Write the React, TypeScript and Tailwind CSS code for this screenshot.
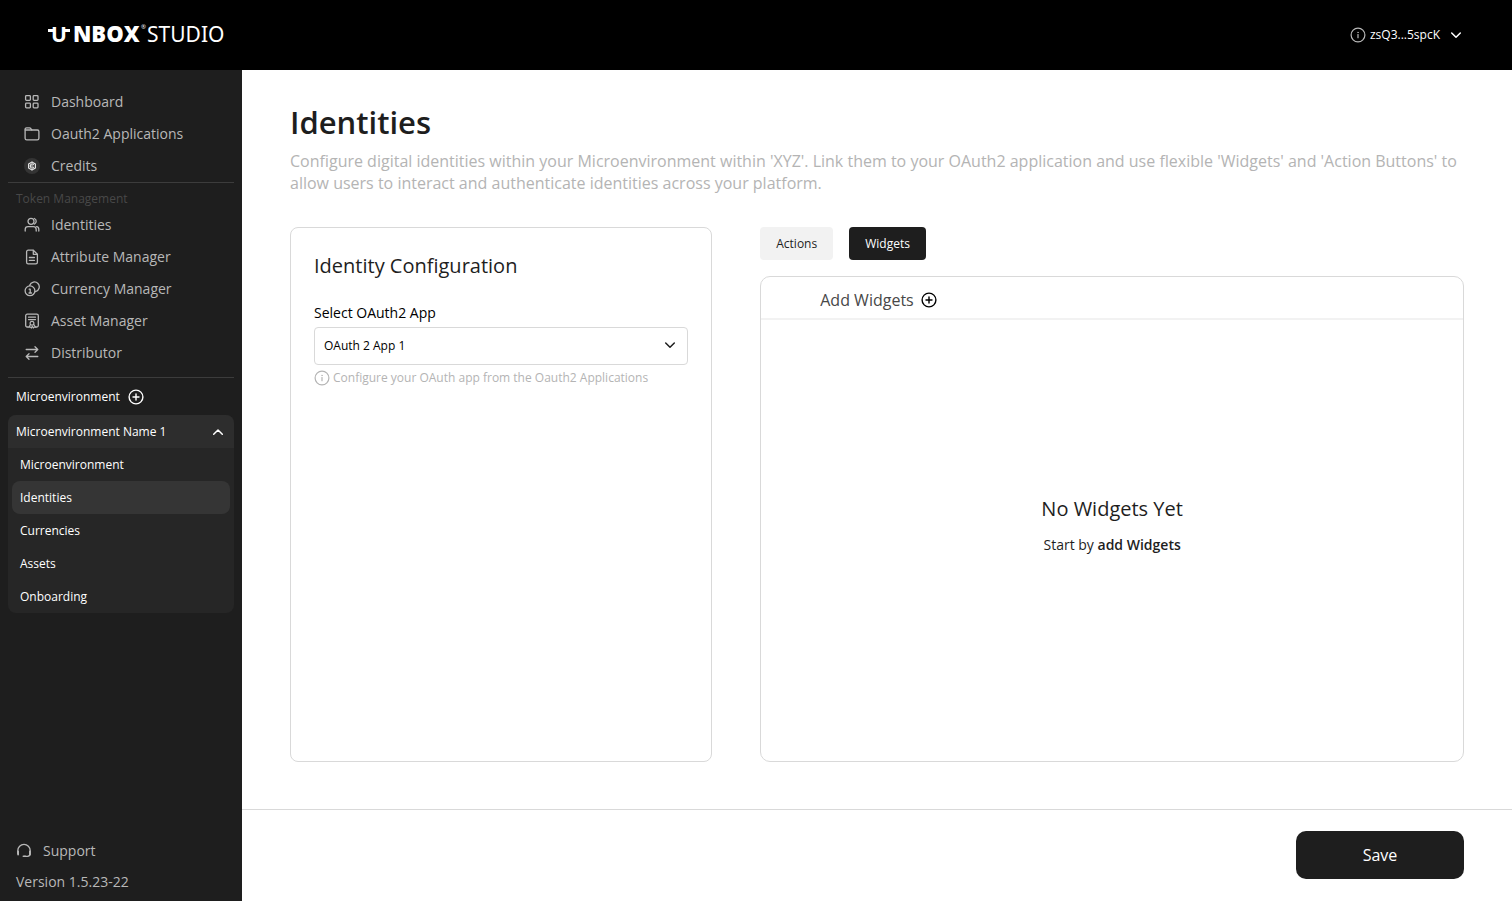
import { useState } from 'react'
import type { ReactNode } from 'react'

interface NavItem {
  label: string
  icon: ReactNode
}

function Icon({ children, className = '' }: { children: ReactNode; className?: string }) {
  return (
    <svg viewBox="0 0 16 16" fill="none" stroke="currentColor" strokeLinecap="round" strokeLinejoin="round"
      className={`w-4 h-4 shrink-0 ${className}`} aria-hidden="true">
      {children}
    </svg>
  )
}

function InfoIcon({ className }: { className?: string }) {
  return (
    <Icon className={className}>
      <circle cx="8" cy="8" r="6.9" strokeWidth="1.2" />
      <path d="M8 7.5v3.2" strokeWidth="1.2" />
      <circle cx="8" cy="5.4" r="0.5" fill="currentColor" strokeWidth="0.4" />
    </Icon>
  )
}

function PlusCircleIcon() {
  return (
    <Icon>
      <circle cx="8" cy="8" r="6.9" strokeWidth="1.4" />
      <path d="M8 5v6M5 8h6" strokeWidth="1.4" />
    </Icon>
  )
}

function Chevron({ up = false, className }: { up?: boolean; className?: string }) {
  return (
    <Icon className={className}>
      <path d={up ? 'M3.7 10.2 8 6l4.3 4.2' : 'M3.7 6 8 10.2 12.3 6'} strokeWidth="1.5" />
    </Icon>
  )
}

const topNav: NavItem[] = [
  {
    label: 'Dashboard',
    icon: (
      <Icon>
        <rect x="1.6" y="1.6" width="4.8" height="4.8" rx="0.8" strokeWidth="1.3" />
        <rect x="9.2" y="1.6" width="4.8" height="4.8" rx="0.8" strokeWidth="1.3" />
        <rect x="1.6" y="9.1" width="4.8" height="4.8" rx="0.8" strokeWidth="1.3" />
        <rect x="9.2" y="9.1" width="4.8" height="4.8" rx="0.8" strokeWidth="1.3" />
      </Icon>
    ),
  },
  {
    label: 'Oauth2 Applications',
    icon: (
      <Icon>
        <path d="M1.1 12.2V3.4c0-.9.6-1.5 1.5-1.5h3c.5 0 .9.2 1.2.6l1 1.5h5.6c.9 0 1.5.6 1.5 1.5v6.7c0 .9-.7 1.6-1.6 1.6H2.7c-.9 0-1.6-.7-1.6-1.6Z" strokeWidth="1.3" />
        <path d="M1.3 4h6.5" strokeWidth="1.3" />
      </Icon>
    ),
  },
  {
    label: 'Credits',
    icon: (
      <Icon>
        <circle cx="8" cy="8" r="8" fill="#343434" stroke="none" />
        <path d="m8 3.9 3.4 2v4.2L8 12.1l-3.4-2V5.9Z" stroke="#e4e4e4" strokeWidth="1.2" />
        <path d="M9.5 6.5A2 2 0 1 0 9.5 9.5M6.6 8h2.5" stroke="#e4e4e4" strokeWidth="1.1" />
      </Icon>
    ),
  },
]

const tokenNav: NavItem[] = [
  {
    label: 'Identities',
    icon: (
      <Icon>
        <circle cx="7" cy="4.3" r="3" strokeWidth="1.3" />
        <path d="M1.2 14v-1.6A2.8 2.8 0 0 1 4 9.6h5.4a2.8 2.8 0 0 1 2.8 2.8V14" strokeWidth="1.3" />
        <path d="M10.3 1.5a3 3 0 0 1 0 5.6M12.6 9.7a2.6 2.6 0 0 1 2.2 2.6V14" strokeWidth="1.3" />
      </Icon>
    ),
  },
  {
    label: 'Attribute Manager',
    icon: (
      <Icon>
        <path d="M9.3 1.2H4.2c-.9 0-1.6.7-1.6 1.6v10.4c0 .9.7 1.6 1.6 1.6h7.6c.9 0 1.6-.7 1.6-1.6V5.3Z" strokeWidth="1.3" />
        <path d="M9.3 1.4v3.9h3.9M5.4 8.5h5M5.4 11.4h5" strokeWidth="1.3" />
      </Icon>
    ),
  },
  {
    label: 'Currency Manager',
    icon: (
      <Icon>
        <circle cx="6" cy="9.8" r="4.9" strokeWidth="1.3" />
        <path d="M5.7 4.3a4.9 4.9 0 1 1 5.8 6.3" strokeWidth="1.3" />
        <path d="M5.2 8.2h1v3.6M5 12h2.5" strokeWidth="1.3" />
      </Icon>
    ),
  },
  {
    label: 'Asset Manager',
    icon: (
      <Icon>
        <path d="M4.3 14H3.2c-.9 0-1.5-.6-1.5-1.5V2.7c0-.9.6-1.5 1.5-1.5h9.6c.9 0 1.5.6 1.5 1.5v9.8c0 .9-.6 1.5-1.5 1.5h-1.1" strokeWidth="1.3" />
        <path d="M4.5 4.2h7M4.5 6.6h7" strokeWidth="1.2" />
        <circle cx="8" cy="10.3" r="1.9" strokeWidth="1.2" />
        <path d="m6.3 11.7-1.5 2.6 1.9-.2.7 1 .9-1.9 1 1.9.7-1 1.7.2-2.1-3" strokeWidth="1.1" />
      </Icon>
    ),
  },
  {
    label: 'Distributor',
    icon: (
      <Icon>
        <path d="M2.2 4.5h11.5M11 1.8l2.8 2.7L11 7.2M13.8 11.5H2.3M5 8.8l-2.8 2.7L5 14.2" strokeWidth="1.3" />
      </Icon>
    ),
  },
]

const microPages = ['Microenvironment', 'Identities', 'Currencies', 'Assets', 'Onboarding']

function Logo() {
  return (
    <svg viewBox="0 0 180 36" className="w-45 h-9 fill-white" role="img" aria-label="Unbox Studio">
      <rect x="0" y="12" width="6" height="3" />
      <rect x="16" y="12" width="6" height="3" />
      <text x="3" y="25" fontSize="21" className="font-bold">U</text>
      <text x="25" y="25" fontSize="22" className="font-extrabold">NBOX</text>
      <text x="93" y="12" fontSize="6">®</text>
      <text x="99" y="25" fontSize="21" className="font-['Noto_Sans',sans-serif]">STUDIO</text>
    </svg>
  )
}

function NavLink({ item }: { item: NavItem }) {
  return (
    <li>
      <a href="#" className="flex items-center gap-[11px] h-8 px-4 text-sm text-[#b8b8b8] hover:text-white">
        {item.icon}
        {item.label}
      </a>
    </li>
  )
}

export default function App() {
  const [tab, setTab] = useState('Widgets')
  const [open, setOpen] = useState(true)
  const [page, setPage] = useState('Identities')
  const [oauthApp, setOauthApp] = useState('OAuth 2 App 1')

  return (
    <div className="min-h-screen flex flex-col bg-white text-[#1e1e1e] font-['Open_Sans',sans-serif]">

      {/* Top bar */}
      <header className="flex items-center justify-between h-[70px] px-12 bg-black text-white">
        <Logo />
        <button className="flex items-center gap-1 text-xs">
          <InfoIcon className="text-[#b8b8b8]" />
          <span>zsQ3...5spcK</span>
          <Chevron className="ml-1" />
        </button>
      </header>

      <div className="flex flex-1">

        {/* Sidebar */}
        <aside className="flex flex-col w-[242px] shrink-0 px-2 pt-4 pb-1 bg-[#1e1e1e]">
          <nav>
            <ul className="border-b border-[#3c3c3c]">
              {topNav.map(item => <NavLink key={item.label} item={item} />)}
            </ul>
            <h2 className="h-[26px] pt-2 px-2 text-xs text-[#484848]">Token Management</h2>
            <ul className="pb-2 border-b border-[#3c3c3c]">
              {tokenNav.map(item => <NavLink key={item.label} item={item} />)}
            </ul>
          </nav>

          <div className="flex items-center gap-2 h-[37px] px-2 text-xs text-white">
            <span>Microenvironment</span>
            <button aria-label="Add microenvironment"><PlusCircleIcon /></button>
          </div>

          <div className="rounded-lg overflow-hidden bg-[#262626] text-xs text-white">
            <button onClick={() => setOpen(!open)}
              className="flex items-center justify-between w-full h-[33px] px-2 bg-[#2d2d2d]">
              Microenvironment Name 1
              <Chevron up={open} />
            </button>
            {open && (
              <ul className="px-1">
                {microPages.map(name => (
                  <li key={name}>
                    <a href="#" onClick={() => setPage(name)}
                      className={`flex items-center h-[33px] px-2 rounded-lg ${page === name ? 'bg-[#353535]' : ''}`}>
                      {name}
                    </a>
                  </li>
                ))}
              </ul>
            )}
          </div>

          <div className="mt-auto px-2 text-sm text-[#b8b8b8]">
            <a href="#" className="flex items-center gap-[11px] h-8">
              <Icon>
                <path d="M1.8 10.5V7.6a6.2 6.2 0 0 1 12.4 0v3c0 1.700-1 2.700-2.700 2.700H8.500" strokeWidth="1.3" />
                <path d="M2.100 8.300v3.200M13.900 8.300v3.200" strokeWidth="1.8" />
                <path d="M7.300 13.300h2" strokeWidth="1.6" />
              </Icon>
              Support
            </a>
            <p className="h-[30px] leading-[30px]">Version 1.5.23-22</p>
          </div>
        </aside>

        {/* Content */}
        <div className="flex flex-col flex-1 min-w-0">
          <main className="flex flex-col flex-1 px-12 pt-8 pb-[47px]">
            <h1 className="text-[31px] leading-10 font-semibold">Identities</h1>
            <p className="mt-2 text-base leading-[22px] text-[#b4b4b4]">
              Configure digital identities within your Microenvironment within 'XYZ'. Link them to your OAuth2 application and use flexible 'Widgets' and 'Action Buttons' to allow users to interact and authenticate identities across your platform.
            </p>

            <div className="grid grid-cols-[3fr_5fr] gap-12 flex-1 mt-[33px]">

              {/* Identity configuration */}
              <section className="px-[23px] py-[22px] border border-[#d9d9d9] rounded-lg">
                <h2 className="text-xl leading-8">Identity Configuration</h2>
                <label htmlFor="oauth-app" className="block mt-[21px] text-sm text-black">Select OAuth2 App</label>
                <div className="relative mt-1">
                  <select id="oauth-app" value={oauthApp} onChange={e => setOauthApp(e.target.value)}
                    className="appearance-none w-full h-[38px] px-[9px] border border-[#d9d9d9] rounded bg-white text-xs text-black">
                    <option>OAuth 2 App 1</option>
                    <option>OAuth 2 App 2</option>
                  </select>
                  <Chevron className="absolute right-[10px] top-[10px] pointer-events-none" />
                </div>
                <p className="flex items-center gap-[3px] mt-[5px] text-xs text-[#b4b4b4]">
                  <InfoIcon />
                  Configure your OAuth app from the Oauth2 Applications
                </p>
              </section>

              {/* Actions / Widgets */}
              <section className="flex flex-col gap-4">
                <div className="flex gap-4">
                  {['Actions', 'Widgets'].map(name => (
                    <button key={name} onClick={() => setTab(name)}
                      className={`h-[33px] px-4 rounded text-xs ${tab === name ? 'bg-[#1e1e1e] text-white' : 'bg-[#f2f2f2]'}`}>
                      {name}
                    </button>
                  ))}
                </div>
                <div className="flex flex-col flex-1 border border-[#d9d9d9] rounded-[10px]">
                  <div className="flex items-center gap-[7px] h-[43px] pt-1 pl-[59px] border-b-2 border-[#f2f2f2] text-base text-[#484848]">
                    Add {tab}
                    <button aria-label={`Add ${tab}`} className="text-black"><PlusCircleIcon /></button>
                  </div>
                  <div className="flex flex-col flex-1 items-center justify-center pb-8">
                    <h3 className="text-xl leading-8">No {tab} Yet</h3>
                    <p className="mt-2 text-sm leading-6">Start by <strong className="font-semibold">add {tab}</strong></p>
                  </div>
                </div>
              </section>
            </div>
          </main>

          <footer className="flex justify-end px-12 pt-[21px] pb-[22px] border-t border-[#d9d9d9]">
            <button className="w-42 h-12 rounded-[10px] bg-[#1e1e1e] text-base text-white">Save</button>
          </footer>
        </div>
      </div>
    </div>
  )
}
